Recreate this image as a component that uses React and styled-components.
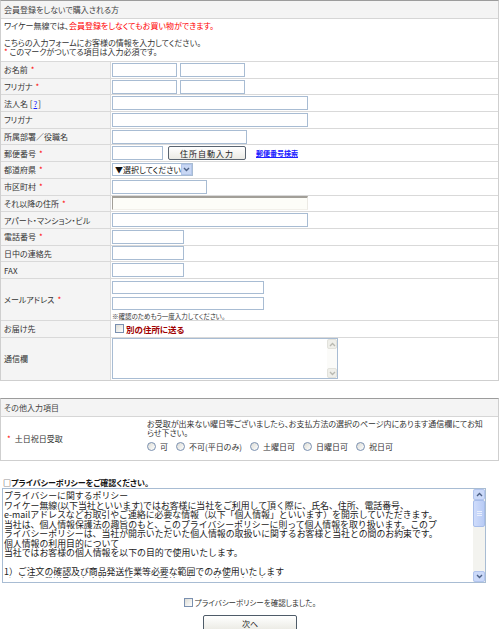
import React from "react";
import styled, { createGlobalStyle } from "styled-components";

const GlobalStyle = createGlobalStyle`
  * { box-sizing: border-box; }
  body {
    margin: 0;
    background: #fff;
    font-family: "Noto Sans CJK JP", "Noto Sans", sans-serif;
    font-size: 8px;
    color: #333;
    font-feature-settings: "palt";
  }
`;

const Page = styled.div`
  width: 500px;
`;

const Panel = styled.section`
  width: 499px;
  border: 1px solid #cfcfcf;
  border-top-color: #9c9c9c;
  margin-top: ${(p) => p.$top || 0}px;
`;

const PanelHeader = styled.div`
  height: 18px;
  line-height: 17px;
  padding-left: 3px;
  background: #f4f4f4;
  border-bottom: 1px solid #d6d6d6;
  color: #444;
`;

const Intro = styled.div`
  height: 42px;
  padding: 2.5px 3px 0;
  line-height: 8.8px;
`;

const Red = styled.span`
  color: #ff0000;
`;

const Req = styled.span`
  color: #ff0000;
  margin-left: 3px;
  font-size: 8px;
`;

const Row = styled.div`
  display: grid;
  grid-template-columns: 110px 1fr;
  height: ${(p) => p.$h || 16.7}px;
  border-top: 1px solid #d9d9d9;
`;

const Label = styled.div`
  display: flex;
  align-items: center;
  padding-left: 3px;
  background: #f4f4f4;
  border-right: 1px solid #d9d9d9;
  white-space: nowrap;
`;

const Value = styled.div`
  display: flex;
  flex-direction: ${(p) => (p.$column ? "column" : "row")};
  align-items: ${(p) => (p.$column ? "flex-start" : "center")};
  gap: ${(p) => p.$gap || 0}px;
  padding: ${(p) => (p.$column ? "2px 0 0 1px" : "0 0 0 1px")};
`;

const TextInput = styled.input`
  width: ${(p) => p.$w}px;
  height: ${(p) => p.$hh || 14}px;
  margin: 0;
  padding: 0 2px;
  font: inherit;
  background: ${(p) => (p.$inset ? "#fdfdf8" : "#fff")};
  border: 1px solid #a8bcd3;
  ${(p) =>
    p.$inset &&
    `border-color: #a29f98 #eceae4 #f2f0ea #a29f98; border-top-width: 2px;`}
  outline: none;
`;

const HelpLink = styled.a`
  color: #1a1aff;
  margin: 0 1px;
`;

const ZipButton = styled.button`
  width: 78px;
  height: 14px;
  margin: 0 0 0 2px;
  padding: 0;
  font: inherit;
  letter-spacing: 1px;
  color: #222;
  border: 1px solid #5a6470;
  border-radius: 2px;
  background: linear-gradient(#ffffff, #ebeae4);
`;

const ZipSearch = styled.a`
  margin-left: 7px;
  font-size: 7px;
  font-weight: 700;
  color: #2020ff;
  text-decoration: underline;
`;

const SelectBox = styled.div`
  position: relative;
  width: 81px;
  height: 13px;
`;

const Select = styled.select`
  appearance: none;
  width: 100%;
  height: 100%;
  margin: 0;
  padding: 0 0 0 2px;
  font: inherit;
  color: #111;
  border: 1px solid #a8bcd3;
  background: #fff;
  outline: none;
`;

const SelectArrow = styled.span`
  position: absolute;
  right: 1px;
  top: 1px;
  width: 11px;
  height: 11px;
  background: #c8d7f4;
  border: 1px solid #b3c6ea;
  display: flex;
  align-items: center;
  justify-content: center;
  pointer-events: none;
`;

const Note = styled.div`
  font-size: 6.5px;
  line-height: 6px;
  margin-top: -0.5px;
`;

const Check = styled.input`
  appearance: none;
  width: 9px;
  height: 9px;
  margin: 0 0 0 ${(p) => p.$ml || 0}px;
  border: 1px solid #7a90b0;
  background: linear-gradient(135deg, #dcdcd5, #ffffff);
`;

const Radio = styled(Check)`
  border-radius: 50%;
`;

const DeliverLabel = styled.label`
  margin-left: 2px;
  color: #a00000;
  font-size: 8.5px;
  font-weight: 700;
`;

/* textarea with a drawn classic scrollbar beside it */
const ScrollFrame = styled.div`
  display: flex;
  align-items: flex-start;
  width: ${(p) => p.$w}px;
  height: ${(p) => p.$h}px;
  margin-left: ${(p) => p.$ml || 0}px;
  border: 1px solid #a8bcd3;
  background: #fff;
`;

const FrameText = styled.textarea`
  flex: 1;
  min-width: 0;
  height: ${(p) => (p.$policy ? "88.5px" : "100%")};
  margin: 0;
  padding: ${(p) => (p.$policy ? "2px 1px 0" : "1px")};
  border: none;
  outline: none;
  resize: none;
  overflow: hidden;
  background: transparent;
  font: inherit;
  ${(p) =>
    p.$policy &&
    `font-feature-settings: normal; font-size: 8.9px; line-height: 9.5px; color: #222;`}
`;

const ScrollBar = styled.div`
  display: flex;
  flex-direction: column;
  align-self: stretch;
  width: ${(p) => (p.$active ? 12 : 10)}px;
  background: ${(p) => (p.$active ? "#f3f3ef" : "#fbfbf9")};
`;

const ScrollButton = styled.div`
  height: ${(p) => (p.$active ? 11 : 10)}px;
  display: flex;
  align-items: center;
  justify-content: center;
  background: ${(p) => (p.$active ? "#cbd9f9" : "#efefea")};
  border: 1px solid ${(p) => (p.$active ? "#b2c5ee" : "#e2e2dc")};
  border-radius: 2px;
`;

const ScrollTrack = styled.div`
  flex: 1;
`;

const Thumb = styled.div`
  height: ${(p) => p.$size}px;
  display: flex;
  flex-direction: column;
  align-items: center;
  justify-content: center;
  gap: 1px;
  background: linear-gradient(to right, #cfdcfb, #b8cbf5);
  border: 1px solid #a7bdea;
  border-radius: 2px;
`;

const Grip = styled.span`
  width: 5px;
  height: 1px;
  background: #e9effd;
`;

const OtherRow = styled.div`
  display: grid;
  grid-template-columns: 145px 1fr;
  height: 43px;
`;

const OtherLabel = styled.div`
  display: flex;
  align-items: center;
  padding-left: 6px;
  gap: 4px;
`;

const OtherBody = styled.div`
  padding: 2px 0 0 1px;
  line-height: 9px;
  white-space: nowrap;
`;

const RadioGroup = styled.div`
  display: flex;
  align-items: center;
  margin-top: 4px;
  height: 10px;
`;

const RadioLabel = styled.label`
  margin: 0 8px 0 4px;
`;

const PolicyTitle = styled.h3`
  margin: 17px 0 0 3px;
  font-size: 8px;
  line-height: 10px;
  font-weight: 700;
  color: #111;
`;

const AgreeRow = styled.div`
  display: flex;
  justify-content: center;
  align-items: center;
  gap: 2px;
  height: 12px;
  margin-top: 13px;
  font-size: 7.5px;
`;

const NextButton = styled.button`
  display: block;
  width: 94px;
  height: 16px;
  margin: 7px auto 0;
  padding: 0;
  font: inherit;
  color: #222;
  border: 1px solid #4e5b68;
  border-radius: 2px;
  background: linear-gradient(#ffffff, #ebeae4);
`;

const policy = `プライバシーに関するポリシー
ワイケー無線(以下当社といいます)ではお客様に当社をご利用して頂く際に、氏名、住所、電話番号、
e-mailアドレスなどお取引やご連絡に必要な情報（以下「個人情報」といいます）を開示していただきます。
当社は、個人情報保護法の趣旨のもと、このプライバシーポリシーに則って個人情報を取り扱います。このプ
ライバシーポリシーは、当社が開示いただいた個人情報の取扱いに関するお客様と当社との間のお約束です。
個人情報の利用目的について
当社ではお客様の個人情報を以下の目的で使用いたします。

1）ご注文の確認及び商品発送作業等必要な範囲でのみ使用いたします
2）商品の発送及びお支払いに関するご連絡のために使用いたします
3）お問い合わせへの回答のために使用いたします
4）新商品やサービスのご案内のために使用いたします

個人情報の第三者への開示について
当社は、法令に基づく場合を除き、お客様の同意なく個人情報を第三者に開示いたしません。
ただし、商品の配送のため配送業者に必要な情報を提供する場合があります。

個人情報の管理について
当社は、お客様の個人情報を正確かつ最新の状態に保ち、不正アクセス・紛失・
破損・改ざん・漏洩などを防止するため、適切な安全対策を実施いたします。`;

const Chevron = ({ up, color = "#4d6185" }) => (
  <svg width="7" height="5" viewBox="0 0 7 5">
    <path
      d={up ? "M1 4 L3.5 1.5 L6 4" : "M1 1 L3.5 3.5 L6 1"}
      fill="none"
      stroke={color}
      strokeWidth="1.4"
    />
  </svg>
);

const ScrollText = ({ w, h, ml, active, policy: isPolicy, value }) => {
  const arrow = active ? "#4d6185" : "#b9b9b1";
  return (
    <ScrollFrame $w={w} $h={h} $ml={ml}>
      <FrameText $policy={isPolicy} readOnly={isPolicy} defaultValue={value} />
      <ScrollBar $active={active}>
        <ScrollButton $active={active}>
          <Chevron up color={arrow} />
        </ScrollButton>
        <ScrollTrack>
          {active && (
            <Thumb $size={27}>
              <Grip />
              <Grip />
              <Grip />
            </Thumb>
          )}
        </ScrollTrack>
        <ScrollButton $active={active}>
          <Chevron color={arrow} />
        </ScrollButton>
      </ScrollBar>
    </ScrollFrame>
  );
};

const FieldRow = ({ label, req, h, children, ...rest }) => (
  <Row $h={h}>
    <Label>
      {label}
      {req && <Req>*</Req>}
    </Label>
    <Value {...rest}>{children}</Value>
  </Row>
);

export default function App() {
  return (
    <Page>
      <GlobalStyle />
      <Panel>
        <PanelHeader>会員登録をしないで購入される方</PanelHeader>
        <Intro>
          ワイケー無線では、<Red>会員登録をしなくてもお買い物ができます。</Red>
          <br />
          <br />
          こちらの入力フォームにお客様の情報を入力してください。
          <br />
          <Red>*</Red> このマークがついてる項目は入力必須です。
        </Intro>

        <FieldRow label="お名前" req $gap={3}>
          <TextInput $w={65} />
          <TextInput $w={65} />
        </FieldRow>
        <FieldRow label="フリガナ" req $gap={3}>
          <TextInput $w={65} />
          <TextInput $w={65} />
        </FieldRow>
        <FieldRow
          label={
            <>
              法人名 [<HelpLink href="#">?</HelpLink>]
            </>
          }
        >
          <TextInput $w={196} />
        </FieldRow>
        <FieldRow label="フリガナ">
          <TextInput $w={196} />
        </FieldRow>
        <FieldRow label="所属部署／役職名">
          <TextInput $w={135} />
        </FieldRow>
        <FieldRow label="郵便番号" req $gap={3}>
          <TextInput $w={51} />
          <ZipButton type="button">住所自動入力</ZipButton>
          <ZipSearch href="#">郵便番号検索</ZipSearch>
        </FieldRow>
        <FieldRow label="都道府県" req>
          <SelectBox>
            <Select defaultValue="">
              <option value="">▼選択してください</option>
            </Select>
            <SelectArrow>
              <Chevron />
            </SelectArrow>
          </SelectBox>
        </FieldRow>
        <FieldRow label="市区町村" req>
          <TextInput $w={95} />
        </FieldRow>
        <FieldRow label="それ以降の住所" req>
          <TextInput $w={196} $inset />
        </FieldRow>
        <FieldRow label="アパート・マンション・ビル">
          <TextInput $w={196} />
        </FieldRow>
        <FieldRow label="電話番号" req>
          <TextInput $w={72} />
        </FieldRow>
        <FieldRow label="日中の連絡先">
          <TextInput $w={72} />
        </FieldRow>
        <FieldRow label="FAX">
          <TextInput $w={72} />
        </FieldRow>
        <FieldRow label="メールアドレス" req h={42.3} $column $gap={3.5}>
          <TextInput $w={152} $hh={13} />
          <TextInput $w={152} $hh={13} />
          <Note>※確認のためもう一度入力してください。</Note>
        </FieldRow>
        <FieldRow label="お届け先" h={16.3}>
          <Check type="checkbox" id="deliver" $ml={3} />
          <DeliverLabel htmlFor="deliver">別の住所に送る</DeliverLabel>
        </FieldRow>
        <FieldRow label="通信欄" h={43.5}>
          <ScrollText w={226} h={41} />
        </FieldRow>
      </Panel>

      <Panel $top={17}>
        <PanelHeader>その他入力項目</PanelHeader>
        <OtherRow>
          <OtherLabel>
            <Red>*</Red>土日祝日受取
          </OtherLabel>
          <OtherBody>
            お受取が出来ない曜日等ございましたら、お支払方法の選択のページ内にあります通信欄にてお知
            <br />
            らせ下さい。
            <RadioGroup>
              <Radio type="radio" name="weekend" id="r1" />
              <RadioLabel htmlFor="r1">可</RadioLabel>
              <Radio type="radio" name="weekend" id="r2" />
              <RadioLabel htmlFor="r2">不可(平日のみ)</RadioLabel>
              <Radio type="radio" name="weekend" id="r3" />
              <RadioLabel htmlFor="r3">土曜日可</RadioLabel>
              <Radio type="radio" name="weekend" id="r4" />
              <RadioLabel htmlFor="r4">日曜日可</RadioLabel>
              <Radio type="radio" name="weekend" id="r5" />
              <RadioLabel htmlFor="r5">祝日可</RadioLabel>
            </RadioGroup>
          </OtherBody>
        </OtherRow>
      </Panel>

      <PolicyTitle>□プライバシーポリシーをご確認ください。</PolicyTitle>
      <ScrollText w={484} h={95} ml={2} active policy value={policy} />

      <AgreeRow>
        <Check type="checkbox" id="agree" />
        <label htmlFor="agree">プライバシーポリシーを確認しました。</label>
      </AgreeRow>
      <NextButton type="button">次へ</NextButton>
    </Page>
  );
}
